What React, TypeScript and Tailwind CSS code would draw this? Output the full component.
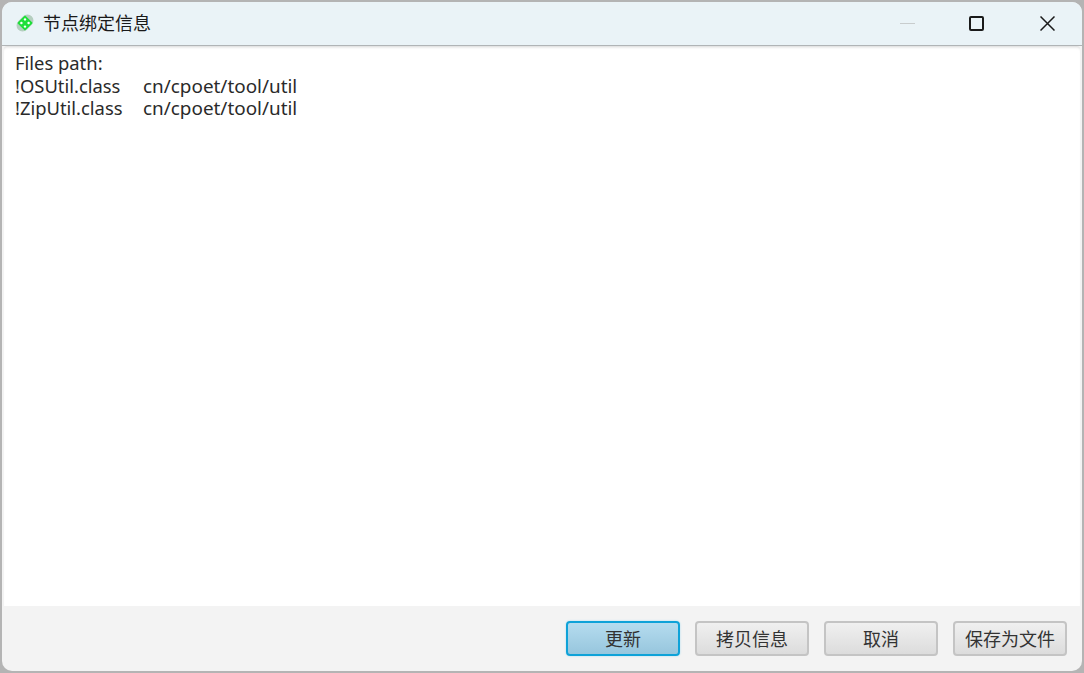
export default function App() {
  const btn =
    "w-[114px] h-[35px] rounded-[4px] border-2 border-[#c4c4c4] bg-gradient-to-b from-[#f0f0f0] to-[#dcdcdc] text-[18px] leading-[29px] text-[#333333] text-center";
  const cjk = { fontFamily: '"Noto Sans CJK SC", "Noto Sans", sans-serif' };
  return (
    <div className="w-[1084px] h-[673px] bg-[#b4b4b4] overflow-hidden p-[2px]">
      <div className="w-[1080px] h-[669px] rounded-[10px] bg-[#f3f3f3] overflow-hidden flex flex-col">
        <div className="h-[43px] bg-[#eaf3f7] flex items-center shrink-0">
          <svg className="ml-[13px] -mt-[1px] w-[20px] h-[20px]" viewBox="0 0 20 20">
            <rect x="0.5" y="4" width="19" height="12" rx="6" transform="rotate(-45 10 10)" fill="#b5cfc0" />
            <rect x="4.5" y="4.5" width="11" height="11" rx="1" transform="rotate(-45 10 10)" fill="#1fe03a" />
            <circle cx="10" cy="6.4" r="1.2" fill="#ffffff" />
            <circle cx="6.4" cy="10" r="1.2" fill="#ffffff" />
            <circle cx="13.6" cy="10" r="1.2" fill="#ffffff" />
            <circle cx="10" cy="13.6" r="1.2" fill="#ffffff" />
          </svg>
          <span className="ml-[8px] text-[18px] text-[#1a1a1a] leading-[24px] -mt-[3px]" style={cjk}>
            节点绑定信息
          </span>
          <div className="ml-auto flex items-center -mt-[1px]">
            <div className="w-[15px] h-[1px] bg-[#c8cccd] mr-[54px]" />
            <div className="w-[15px] h-[15px] border-2 border-[#1a1a1a] rounded-[2px] mr-[56px]" />
            <svg className="w-[15px] h-[15px] mr-[27px]" viewBox="0 0 15 15" fill="none" stroke="#1a1a1a" strokeWidth="1.5">
              <path d="M0.5 0.5 L14.5 14.5 M14.5 0.5 L0.5 14.5" />
            </svg>
          </div>
        </div>
        <div className="h-[1px] bg-[#b0b4b6] shrink-0" />
        <div
          className="h-[560px] mx-[2px] bg-white rounded-t-[3px] pl-[11px] pt-[6px] text-[18.9px] leading-[22.5px] text-[#2a2a2a] shrink-0 shadow-[inset_0_3px_3px_-2px_#d5d5d5]"
          style={{ fontFamily: '"Noto Sans", sans-serif' }}
        >
          <div className="text-[18.4px]">Files path:</div>
          <div className="flex">
            <span className="w-[128px] text-[18.4px]">!OSUtil.class</span>
            <span>cn/cpoet/tool/util</span>
          </div>
          <div className="flex">
            <span className="w-[128px] text-[18.4px]">!ZipUtil.class</span>
            <span>cn/cpoet/tool/util</span>
          </div>
        </div>
        <div className="flex-1 flex justify-end items-start gap-[15px] pt-[15px] pr-[15px]" style={cjk}>
          <button className="w-[114px] h-[35px] rounded-[4px] border-2 border-[#0ea2d8] bg-gradient-to-b from-[#b5dcef] to-[#97c6dd] text-[18px] leading-[29px] text-[#333333] text-center shadow-[0_0_2px_#9fd8ee]">
            更新
          </button>
          <button className={btn}>拷贝信息</button>
          <button className={btn}>取消</button>
          <button className={btn}>保存为文件</button>
        </div>
      </div>
    </div>
  );
}
